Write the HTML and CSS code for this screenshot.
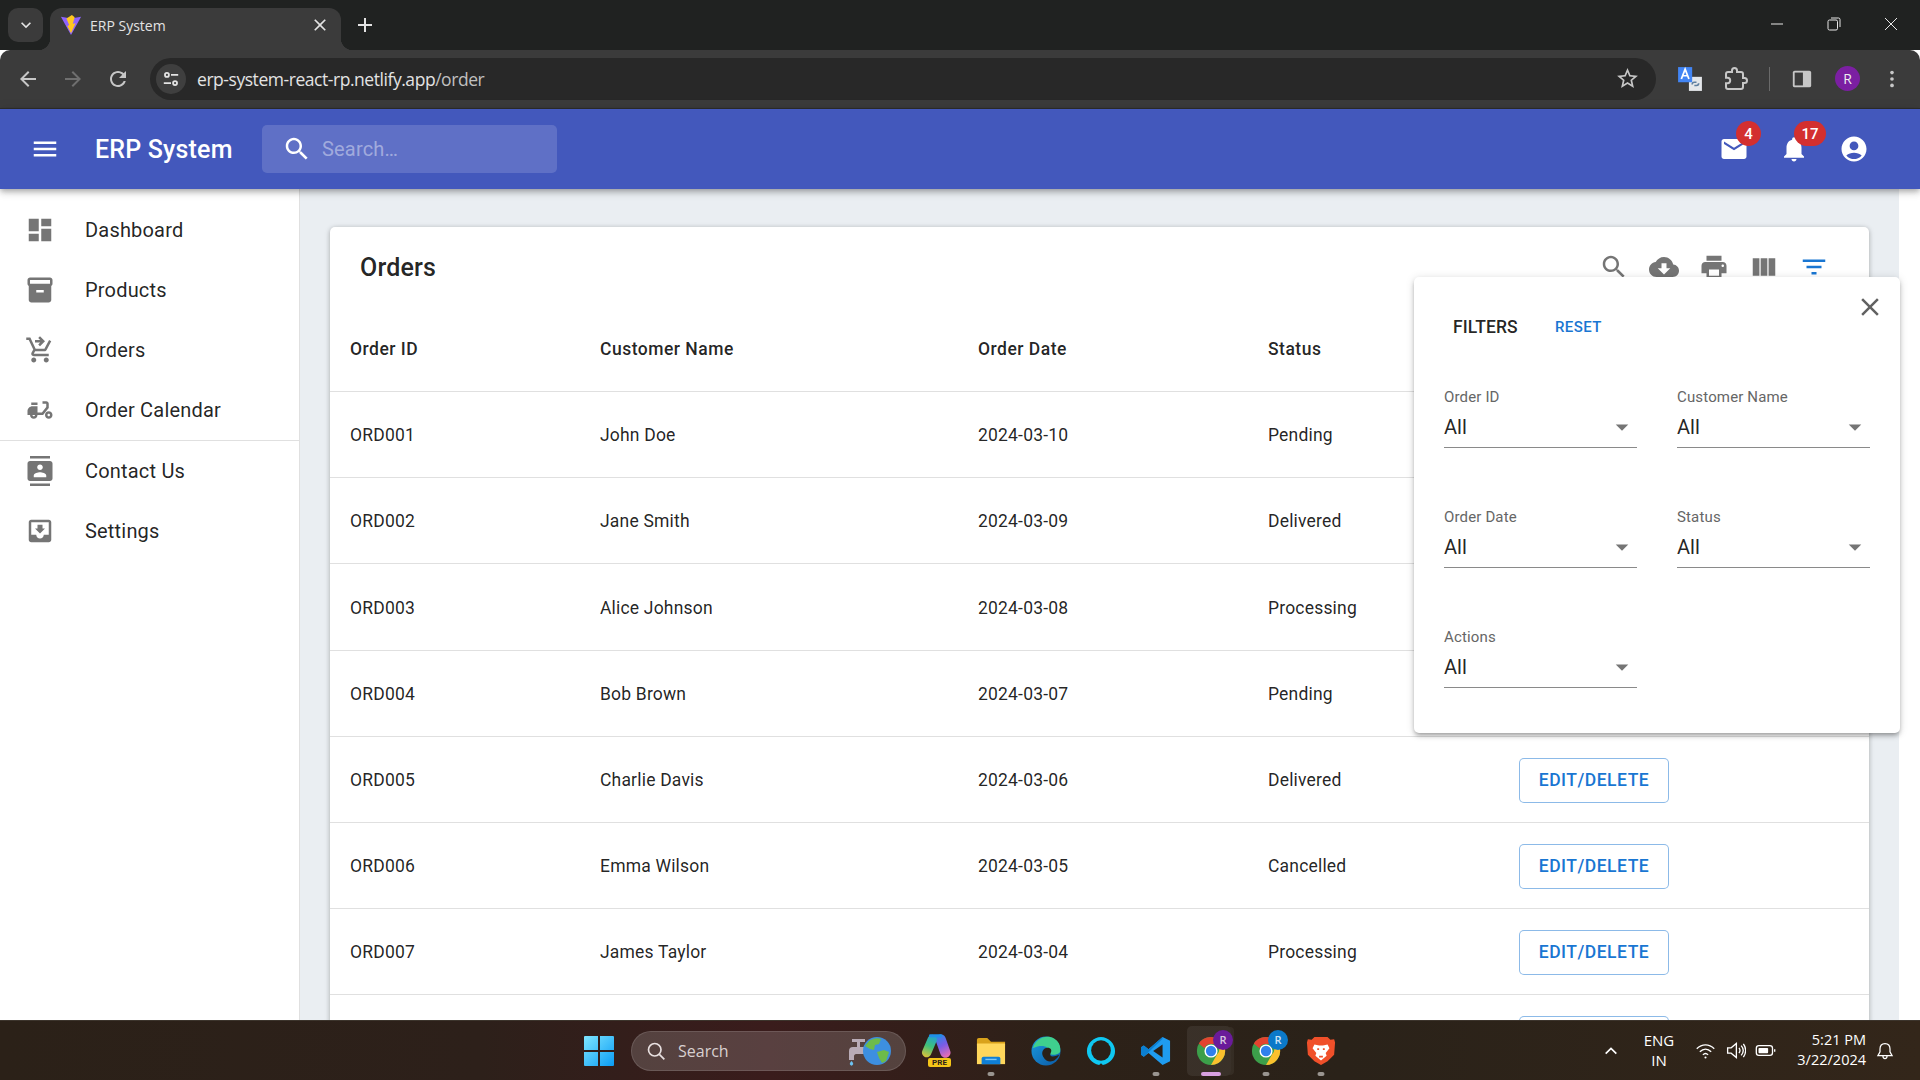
FILE: index.html
```html
<!DOCTYPE html>
<html lang="en">
<head>
  <meta charset="UTF-8">
  <meta name="viewport" content="width=device-width, initial-scale=1.0">
  <title>ERP System</title>
  <link rel="stylesheet" href="styles.css">
</head>
<body>
  <!-- browser chrome -->
  <div class="tab-strip">
    <div class="tab-list-btn"><svg viewBox="0 0 24 24" class="i18"><path d="M7.41 8.59 12 13.17l4.59-4.58L18 10l-6 6-6-6z"/></svg></div>
    <div class="tab">
      <svg viewBox="0 0 24 24" class="favicon">
        <path d="M1 3l11 2 11-2-11 20z" fill="#8f63ff"/>
        <path d="M13 1 7 5l3 7-2 1 4 8 5-11-3 .5 2-7z" fill="#ffc820"/>
      </svg>
      <span class="tab-title">ERP System</span>
      <svg viewBox="0 0 24 24" class="i18 tab-close"><path d="M19 6.41 17.59 5 12 10.59 6.41 5 5 6.41 10.59 12 5 17.59 6.41 19 12 13.41 17.59 19 19 17.59 13.41 12z"/></svg>
    </div>
    <svg viewBox="0 0 24 24" class="new-tab"><path d="M19 13h-6v6h-2v-6H5v-2h6V5h2v6h6v2z"/></svg>
    <div class="window-controls">
      <svg viewBox="0 0 14 14" class="win-btn"><path d="M1 7h12"/></svg>
      <svg viewBox="0 0 14 14" class="win-btn"><rect x="1" y="3" width="9.5" height="10" rx="1.5"/><path d="M4 1h7.5A1.5 1.5 0 0 1 13 2.5V10"/></svg>
      <svg viewBox="0 0 14 14" class="win-btn"><path d="M1 1l12 12M13 1 1 13"/></svg>
    </div>
  </div>
  <div class="toolbar">
    <svg viewBox="0 0 24 24" class="nav-icon"><path d="M20 11H7.83l5.59-5.59L12 4l-8 8 8 8 1.41-1.41L7.83 13H20v-2z"/></svg>
    <svg viewBox="0 0 24 24" class="nav-icon disabled"><path d="M12 4l-1.41 1.41L16.17 11H4v2h12.17l-5.58 5.59L12 20l8-8z"/></svg>
    <svg viewBox="0 0 24 24" class="nav-icon"><path d="M17.65 6.35C16.2 4.9 14.21 4 12 4c-4.42 0-7.99 3.58-7.99 8s3.57 8 7.99 8c3.73 0 6.84-2.55 7.73-6h-2.08c-.82 2.33-3.04 4-5.65 4-3.31 0-6-2.69-6-6s2.69-6 6-6c1.66 0 3.14.69 4.22 1.78L13 11h7V4l-2.35 2.35z"/></svg>
    <div class="address-bar">
      <span class="site-info">
        <svg viewBox="0 0 20 20" class="tune"><circle cx="5.5" cy="5.5" r="2.2"/><path d="M10 5.5h8M2 14.5h8"/><circle cx="14.5" cy="14.5" r="2.2"/></svg>
      </span>
      <span class="url">erp-system-react-rp.netlify.app<span class="url-path">/order</span></span>
      <svg viewBox="0 0 24 24" class="star"><path d="M22 9.24l-7.19-.62L12 2 9.19 8.63 2 9.24l5.46 4.73L5.82 21 12 17.27 18.18 21l-1.63-7.03L22 9.24zM12 15.4l-3.76 2.27 1-4.28-3.32-2.88 4.38-.38L12 6.1l1.71 4.04 4.38.38-3.32 2.88 1 4.28L12 15.4z"/></svg>
    </div>
    <div class="toolbar-right">
      <svg viewBox="0 0 24 24" class="translate">
        <rect x="11" y="10" width="12" height="13" fill="#e4e7ea"/>
        <path d="M14 17a2 2 0 0 1 2-2h2M20 16a2 2 0 0 1-2 2h-2" fill="none" stroke="#5f7f9f" stroke-width="1.5"/>
        <rect x="1" y="1" width="13" height="14" fill="#4285f4"/>
        <path d="M4 12l3.5-9L11 12M5.2 9h4.6" fill="none" stroke="#fff" stroke-width="1.6"/>
      </svg>
      <svg viewBox="0 0 24 24" class="puzzle"><path d="M20.5 11H19V7c0-1.1-.9-2-2-2h-4V3.5C13 2.12 11.88 1 10.5 1S8 2.12 8 3.5V5H4c-1.1 0-1.99.9-1.99 2v3.8H3.5c1.49 0 2.7 1.21 2.7 2.7s-1.21 2.7-2.7 2.7H2V20c0 1.1.9 2 2 2h13c1.1 0 2-.9 2-2v-4h1.5c1.38 0 2.5-1.12 2.5-2.5S21.88 11 20.5 11z"/></svg>
      <span class="toolbar-sep"></span>
      <svg viewBox="0 0 24 24" class="side-panel"><rect x="2" y="3" width="20" height="18" rx="2" fill="#c7c7c7"/><rect x="4" y="5" width="9" height="14" fill="#3b3b3b"/></svg>
      <span class="avatar">R</span>
      <svg viewBox="0 0 24 24" class="kebab"><circle cx="12" cy="5" r="2"/><circle cx="12" cy="12" r="2"/><circle cx="12" cy="19" r="2"/></svg>
    </div>
  </div>

  <!-- app bar -->
  <header class="app-bar">
    <svg viewBox="0 0 24 24" class="icon"><path d="M3 18h18v-2H3v2zm0-5h18v-2H3v2zm0-7v2h18V6H3z"/></svg>
    <h1 class="app-title">ERP System</h1>
    <div class="search">
      <svg viewBox="0 0 24 24" class="icon"><path d="M15.5 14h-.79l-.28-.27C15.41 12.59 16 11.11 16 9.5 16 5.91 13.09 3 9.5 3S3 5.91 3 9.5 5.91 16 9.5 16c1.61 0 3.09-.59 4.23-1.57l.27.28v.79l5 4.99L20.49 19l-4.99-5zm-6 0C7.01 14 5 11.99 5 9.5S7.01 5 9.5 5 14 7.01 14 9.5 11.99 14 9.5 14z"/></svg>
      <span class="search-placeholder">Search…</span>
    </div>
    <div class="app-actions">
      <span class="action">
        <svg viewBox="0 0 24 24" class="icon"><path d="M20 4H4c-1.1 0-1.99.9-1.99 2L2 18c0 1.1.9 2 2 2h16c1.1 0 2-.9 2-2V6c0-1.1-.9-2-2-2zm0 4l-8 5-8-5V6l8 5 8-5v2z"/></svg>
        <span class="badge badge-mail">4</span>
      </span>
      <span class="action">
        <svg viewBox="0 0 24 24" class="icon"><path d="M12 22c1.1 0 2-.9 2-2h-4c0 1.1.89 2 2 2zm6-6v-5c0-3.07-1.64-5.64-4.5-6.32V4c0-.83-.67-1.5-1.5-1.5s-1.5.67-1.5 1.5v.68C7.63 5.36 6 7.92 6 11v5l-2 2v1h16v-1l-2-2z"/></svg>
        <span class="badge badge-bell">17</span>
      </span>
      <span class="action">
        <svg viewBox="0 0 24 24" class="icon"><path d="M12 2C6.48 2 2 6.48 2 12s4.48 10 10 10 10-4.48 10-10S17.52 2 12 2zm0 4c1.93 0 3.5 1.57 3.5 3.5S13.93 13 12 13s-3.5-1.57-3.5-3.5S10.07 6 12 6zm0 14c-2.03 0-4.43-.82-6.14-2.88C7.55 15.8 9.68 15 12 15s4.45.8 6.14 2.12C16.43 19.18 14.03 20 12 20z"/></svg>
      </span>
    </div>
  </header>

  <div class="content">
    <aside class="sidebar">
      <ul class="side-list">
        <li><svg viewBox="0 0 24 24" class="icon"><path d="M3 13h8V3H3v10zm0 8h8v-6H3v6zm10 0h8V11h-8v10zm0-18v6h8V3h-8z"/></svg>Dashboard</li>
        <li><svg viewBox="0 0 24 24" class="icon"><path d="M20 2H4c-1 0-2 .9-2 2v3.01c0 .72.43 1.34 1 1.69V20c0 1.1 1.1 2 2 2h14c.9 0 2-.9 2-2V8.7c.57-.35 1-.97 1-1.69V4c0-1.1-1-2-2-2zm-5 12H9v-2h6v2zm5-7H4V4h16v3z"/></svg>Products</li>
        <li><svg viewBox="0 0 24 24" class="icon"><path d="M7 18c-1.1 0-1.99.9-1.99 2S5.9 22 7 22s2-.9 2-2-.9-2-2-2zm10 0c-1.1 0-1.99.9-1.99 2s.89 2 1.99 2 2-.9 2-2-.9-2-2-2zm-8.9-5h7.45c.75 0 1.41-.41 1.75-1.03L21 4.96 19.25 4l-3.7 7H8.53L4.27 2H1v2h2l3.6 7.59-1.35 2.44C4.52 15.37 5.48 17 7 17h12v-2H7l1.1-2zM12 1l4 4-4 4-1.41-1.41L12.17 6H8V4h4.17l-1.59-1.59L12 1z"/></svg>Orders</li>
        <li><svg viewBox="0 0 24 24" class="icon"><path d="M19 7c0-1.1-.9-2-2-2h-3v2h3v2.65L13.52 14H10V9H6c-2.21 0-4 1.79-4 4v3h2c0 1.66 1.34 3 3 3s3-1.34 3-3h4.48L19 10.35V7zM7 17c-.55 0-1-.45-1-1h2c0 .55-.45 1-1 1z"/><path d="M5 6h5v2H5z"/><path d="M19 13c-1.66 0-3 1.34-3 3s1.34 3 3 3 3-1.34 3-3-1.34-3-3-3zm0 4c-.55 0-1-.45-1-1s.45-1 1-1 1 .45 1 1-.45 1-1 1z"/></svg>Order Calendar</li>
      </ul>
      <hr class="side-divider">
      <ul class="side-list">
        <li><svg viewBox="0 0 24 24" class="icon"><path d="M20 0H4v2h16V0zM4 24h16v-2H4v2zM20 4H4c-1.1 0-2 .9-2 2v12c0 1.1.9 2 2 2h16c1.1 0 2-.9 2-2V6c0-1.1-.9-2-2-2zm-8 2.75c1.24 0 2.25 1.01 2.25 2.25s-1.01 2.25-2.25 2.25S9.75 10.24 9.75 9 10.76 6.75 12 6.75zM17 17H7v-1.5c0-1.67 3.33-2.5 5-2.5s5 .83 5 2.5V17z"/></svg>Contact Us</li>
        <li><svg viewBox="0 0 24 24" class="icon"><path d="M19 3H4.99c-1.11 0-1.98.89-1.98 2L3 19c0 1.1.88 2 1.99 2H19c1.1 0 2-.9 2-2V5c0-1.11-.9-2-2-2zm0 12h-4c0 1.66-1.35 3-3 3s-3-1.34-3-3H4.99V5H19v10zm-3-5h-2V7h-4v3H8l4 4 4-4z"/></svg>Settings</li>
      </ul>
    </aside>

    <main class="main">
      <section class="card">
        <div class="card-header">
          <h2 class="card-title">Orders</h2>
          <div class="card-tools">
            <svg viewBox="0 0 24 24" class="icon"><path d="M15.5 14h-.79l-.28-.27C15.41 12.59 16 11.11 16 9.5 16 5.91 13.09 3 9.5 3S3 5.91 3 9.5 5.91 16 9.5 16c1.61 0 3.09-.59 4.23-1.57l.27.28v.79l5 4.99L20.49 19l-4.99-5zm-6 0C7.01 14 5 11.99 5 9.5S7.01 5 9.5 5 14 7.01 14 9.5 11.99 14 9.5 14z"/></svg>
            <svg viewBox="0 0 24 24" class="icon"><path d="M19.35 10.04C18.67 6.59 15.64 4 12 4 9.11 4 6.6 5.64 5.35 8.04 2.34 8.36 0 10.91 0 14c0 3.31 2.69 6 6 6h13c2.76 0 5-2.24 5-5 0-2.64-2.05-4.78-4.65-4.96zM17 13l-5 5-5-5h3V9h4v4h3z"/></svg>
            <svg viewBox="0 0 24 24" class="icon"><path d="M19 8H5c-1.66 0-3 1.34-3 3v6h4v4h12v-4h4v-6c0-1.66-1.34-3-3-3zm-3 11H8v-5h8v5zm3-7c-.55 0-1-.45-1-1s.45-1 1-1 1 .45 1 1-.45 1-1 1zm-1-9H6v4h12V3z"/></svg>
            <svg viewBox="0 0 24 24" class="icon"><path d="M14.67 5v14H9.33V5h5.34zm1 14H21V5h-5.33v14zm-7.34 0V5H3v14h5.33z"/></svg>
            <svg viewBox="0 0 24 24" class="icon icon-active"><path d="M10 18h4v-2h-4v2zM3 6v2h18V6H3zm3 7h12v-2H6v2z"/></svg>
          </div>
        </div>
        <table class="orders">
          <colgroup>
            <col class="col-id"><col class="col-name"><col class="col-date"><col class="col-status"><col>
          </colgroup>
          <thead>
            <tr><th>Order ID</th><th>Customer Name</th><th>Order Date</th><th>Status</th><th>Actions</th></tr>
          </thead>
          <tbody>
            <tr><td>ORD001</td><td>John Doe</td><td>2024-03-10</td><td>Pending</td><td><button class="edit-btn">EDIT/DELETE</button></td></tr>
            <tr><td>ORD002</td><td>Jane Smith</td><td>2024-03-09</td><td>Delivered</td><td><button class="edit-btn">EDIT/DELETE</button></td></tr>
            <tr class="row-tall"><td>ORD003</td><td>Alice Johnson</td><td>2024-03-08</td><td>Processing</td><td><button class="edit-btn">EDIT/DELETE</button></td></tr>
            <tr><td>ORD004</td><td>Bob Brown</td><td>2024-03-07</td><td>Pending</td><td><button class="edit-btn">EDIT/DELETE</button></td></tr>
            <tr><td>ORD005</td><td>Charlie Davis</td><td>2024-03-06</td><td>Delivered</td><td><button class="edit-btn">EDIT/DELETE</button></td></tr>
            <tr><td>ORD006</td><td>Emma Wilson</td><td>2024-03-05</td><td>Cancelled</td><td><button class="edit-btn">EDIT/DELETE</button></td></tr>
            <tr><td>ORD007</td><td>James Taylor</td><td>2024-03-04</td><td>Processing</td><td><button class="edit-btn">EDIT/DELETE</button></td></tr>
            <!-- only the top edge of the next button shows above the taskbar -->
            <tr><td></td><td></td><td></td><td></td><td><button class="edit-btn"></button></td></tr>
          </tbody>
        </table>
      </section>
    </main>
    <div class="scroll-track"></div>

    <!-- filter popup sits over the table -->
    <div class="filter-popup">
      <svg viewBox="0 0 24 24" class="icon popup-close"><path d="M19 6.41 17.59 5 12 10.59 6.41 5 5 6.41 10.59 12 5 17.59 6.41 19 12 13.41 17.59 19 19 17.59 13.41 12z"/></svg>
      <div class="filter-head">
        <span class="filter-title">FILTERS</span>
        <span class="filter-reset">RESET</span>
      </div>
      <div class="filter-grid">
        <div class="field"><label>Order ID</label><div class="select"><span>All</span><svg viewBox="0 0 24 24" class="icon"><path d="M7 10l5 5 5-5z"/></svg></div></div>
        <div class="field"><label>Customer Name</label><div class="select"><span>All</span><svg viewBox="0 0 24 24" class="icon"><path d="M7 10l5 5 5-5z"/></svg></div></div>
        <div class="field"><label>Order Date</label><div class="select"><span>All</span><svg viewBox="0 0 24 24" class="icon"><path d="M7 10l5 5 5-5z"/></svg></div></div>
        <div class="field"><label>Status</label><div class="select"><span>All</span><svg viewBox="0 0 24 24" class="icon"><path d="M7 10l5 5 5-5z"/></svg></div></div>
        <div class="field"><label>Actions</label><div class="select"><span>All</span><svg viewBox="0 0 24 24" class="icon"><path d="M7 10l5 5 5-5z"/></svg></div></div>
      </div>
    </div>
  </div>

  <!-- windows taskbar -->
  <footer class="taskbar">
    <svg viewBox="0 0 30 30" class="win-logo">
      <defs><linearGradient id="winGrad" x1="0" y1="0" x2="1" y2="1"><stop offset="0" stop-color="#7fe6ff"/><stop offset="1" stop-color="#0a9cf5"/></linearGradient></defs>
      <path d="M0 1a1 1 0 0 1 1-1h13v14H0zM16 0h13a1 1 0 0 1 1 1v13H16zM0 16h14v14H1a1 1 0 0 1-1-1zM16 16h14v13a1 1 0 0 1-1 1H16z" fill="url(#winGrad)"/>
    </svg>
    <div class="task-search">
      <svg viewBox="0 0 24 24" class="task-search-icon"><circle cx="10.5" cy="10.5" r="7.5"/><path d="M16 16l6 6"/></svg>
      <span class="task-search-text">Search</span>
      <svg viewBox="0 0 44 30" class="task-search-art">
        <path d="M2 24v-9a4 4 0 0 1 4-4h4V6H5V3h13v3h-5v5h6v7H9c-1 0-2 1-2 2v4z" fill="#b9abb6"/>
        <path d="M4.5 25c-2 2.5-2.5 3.5 0 4.8 2.5-1.3 2-2.3 0-4.8z" fill="#6cc2f2"/>
        <circle cx="30" cy="15" r="14" fill="#3d8fe0"/>
        <path d="M22 5c4-3 9-3.5 12-2l-2 5-4 1-1 5-4-1-5-3zM30 16l7-2 5 2-3 9-4 2-3-5z" fill="#6dbb4a"/>
      </svg>
    </div>
    <div class="task-apps">
      <span class="task-app">
        <svg viewBox="0 0 32 28" class="app-icon copilot">
          <defs>
            <linearGradient id="copA" gradientUnits="userSpaceOnUse" x1="17" y1="0" x2="30" y2="24"><stop offset="0" stop-color="#1f8fe8"/><stop offset=".5" stop-color="#7a5ce6"/><stop offset="1" stop-color="#ee6fb0"/></linearGradient>
            <linearGradient id="copB" gradientUnits="userSpaceOnUse" x1="14" y1="0" x2="3" y2="26"><stop offset="0" stop-color="#1f9be0"/><stop offset=".5" stop-color="#3fc07a"/><stop offset="1" stop-color="#f4c430"/></linearGradient>
          </defs>
          <path d="M21 6l5 14" stroke="url(#copA)" stroke-width="11" stroke-linecap="round" fill="none"/>
          <path d="M12 6 6 20" stroke="url(#copB)" stroke-width="10" stroke-linecap="round" fill="none"/>
          <path d="M10 2h11" stroke="#1f8fe8" stroke-width="3" stroke-linecap="round"/>
        </svg>
        <span class="pre-tag">PRE</span>
      </span>
      <span class="task-app">
        <svg viewBox="0 0 32 32" class="app-icon">
          <path d="M1 4a2 2 0 0 1 2-2h9l4 4h15v4H1z" fill="#d9a21b"/>
          <path d="M1 8h30v22H1z" fill="#ffd75c"/>
          <path d="M6 30v-6a2 2 0 0 1 2-2h16a2 2 0 0 1 2 2v6z" fill="#0f7fd6"/>
          <path d="M10 25h12" stroke="#7cc7f5" stroke-width="1.5"/>
        </svg>
        <span class="task-dot"></span>
      </span>
      <span class="task-app">
        <svg viewBox="0 0 32 32" class="app-icon">
          <defs><linearGradient id="edgeGrad" x1="0" y1="0" x2="1" y2="1"><stop offset="0" stop-color="#1a9be0"/><stop offset="1" stop-color="#0c59a4"/></linearGradient></defs>
          <circle cx="16" cy="16" r="15.5" fill="url(#edgeGrad)"/>
          <path d="M2 13C5 2 17-2 25 3c5 3 7 8 6 14-1 2-4 3-8 3-3 0-5-1-4-3 1-5-6-9-17-4z" fill="#3fcf8e"/>
          <path d="M13 22c-3-5 1-11 7-9 2 1 2 3 1 5-2 4 2 5 9 2-3 7-12 11-17 2z" fill="#2a2018"/>
        </svg>
      </span>
      <span class="task-app">
        <svg viewBox="0 0 32 32" class="app-icon">
          <path d="M16 29l-2 2C6 29 1 23 1 16 1 8 8 1 16 1s15 7 15 15c0 7-5 13-13 15z" fill="#0fc8f2"/>
          <ellipse cx="16" cy="15.5" rx="10.5" ry="11" fill="#2a2018"/>
        </svg>
      </span>
      <span class="task-app">
        <svg viewBox="0 0 32 32" class="app-icon">
          <path d="M23 1l8 4v22l-8 4-15-13-5 4-3-2V12l3-2 5 4z" fill="#1f9cf0"/>
          <path d="M23 1 8 14 3 10 0 12v8l3 2 20-19z" fill="#0b7fd1"/>
          <path d="M23 9v14L13 16z" fill="#2a2018"/>
        </svg>
        <span class="task-dot"></span>
      </span>
      <span class="task-app task-app-active">
        <svg viewBox="0 0 32 32" class="app-icon">
          <circle cx="16" cy="16" r="15" fill="#3c9f4a"/>
          <path d="M16 1a15 15 0 0 1 13 7.5H16a7.5 7.5 0 0 0-7 4.5L3 8a15 15 0 0 1 13-7z" fill="#e3432f"/>
          <path d="M29 8.5A15 15 0 0 1 16 31l6.5-11.5a7.5 7.5 0 0 0 0-11z" fill="#fbc02d"/>
          <circle cx="16" cy="16" r="7" fill="#fff"/>
          <circle cx="16" cy="16" r="5.5" fill="#2f80ed"/>
        </svg>
        <span class="profile-badge purple">R</span>
        <span class="task-pill"></span>
      </span>
      <span class="task-app">
        <svg viewBox="0 0 32 32" class="app-icon">
          <circle cx="16" cy="16" r="15" fill="#3c9f4a"/>
          <path d="M16 1a15 15 0 0 1 13 7.5H16a7.5 7.5 0 0 0-7 4.5L3 8a15 15 0 0 1 13-7z" fill="#e3432f"/>
          <path d="M29 8.5A15 15 0 0 1 16 31l6.5-11.5a7.5 7.5 0 0 0 0-11z" fill="#fbc02d"/>
          <circle cx="16" cy="16" r="7" fill="#fff"/>
          <circle cx="16" cy="16" r="5.5" fill="#2f80ed"/>
        </svg>
        <span class="profile-badge blue">R</span>
        <span class="task-dot"></span>
      </span>
      <span class="task-app">
        <svg viewBox="0 0 32 32" class="app-icon">
          <path d="M9 1h14l3 3 4-.5L31 7l-1 13-7 7-7 4-7-4-7-7L1 7l1-3.5L6 4z" fill="#f0502a"/>
          <path d="M9 9l5 1h4l5-1 2 4-4 5 1 3-6 5-6-5 1-3-4-5z" fill="#fff"/>
          <path d="M12 14h2M18 14h2M14 22h4" stroke="#f0502a" stroke-width="2"/>
        </svg>
        <span class="task-dot"></span>
      </span>
    </div>
    <div class="tray">
      <svg viewBox="0 0 24 24" class="tray-caret"><path d="M4 16l8-8 8 8"/></svg>
      <div class="tray-lang"><span>ENG</span><span>IN</span></div>
      <svg viewBox="0 0 24 24" class="tray-icon"><path d="M2 10c6-6 14-6 20 0M5.5 13.5c4-4 9-4 13 0M9 17c2-2 4-2 6 0"/><circle cx="12" cy="20" r="1.2" fill="#fff" stroke="none"/></svg>
      <svg viewBox="0 0 24 24" class="tray-icon"><path d="M3 9v6h4l6 5V4L7 9zM16 9c1.5 2 1.5 4 0 6M18.5 6.5c3 3.5 3 7.5 0 11M21 4.5c3.5 5 3.5 10 0 15"/></svg>
      <svg viewBox="0 0 24 24" class="tray-icon"><rect x="1.5" y="6.5" width="18.5" height="11" rx="3"/><rect x="4" y="9" width="11" height="6" rx="1" fill="#fff" stroke="none"/><path d="M22.5 10.5v3"/></svg>
      <div class="tray-clock"><span>5:21 PM</span><span>3/22/2024</span></div>
      <svg viewBox="0 0 24 24" class="tray-bell"><path d="M12 3c-4 0-6 3-6 6.5V13l-2.5 4.5h17L18 13V9.5C18 6 16 3 12 3zM9.5 18c0 2 1 3 2.5 3s2.500-1 2.500-3"/></svg>
    </div>
  </footer>
</body>
</html>
```

FILE: styles.css
```css
* {
  box-sizing: border-box;
}

body {
  margin: 0;
  height: 100vh;
  overflow: hidden;
  display: flex;
  flex-direction: column;
  font-family: Roboto, Arial, sans-serif;
  color: rgba(0, 0, 0, 0.87);
  background: #fff;
}

svg {
  display: block;
  flex-shrink: 0;
}

/* browser chrome */
.tab-strip {
  height: 50px;
  background: #202221;
  display: flex;
  align-items: flex-start;
  padding: 8px 0 0 8px;
  color: #e3e3e3;
  font-family: "Open Sans", "Noto Sans", sans-serif;
}

.tab-list-btn {
  width: 35px;
  height: 34px;
  background: #3b3b3b;
  border-radius: 10px;
  display: flex;
  align-items: center;
  justify-content: center;
}

.i18 {
  width: 20px;
  height: 20px;
  fill: #e3e3e3;
}

.tab {
  position: relative;
  width: 291px;
  height: 42px;
  margin-left: 7px;
  background: #3b3b3b;
  border-radius: 12px 12px 0 0;
  display: flex;
  align-items: center;
  padding: 0 11px 8px 10px;
}

.tab::before,
.tab::after {
  content: "";
  position: absolute;
  bottom: 0;
  width: 12px;
  height: 12px;
}

.tab::before {
  left: -12px;
  background: radial-gradient(circle at 0 0, transparent 12px, #3b3b3b 12.5px);
}

.tab::after {
  right: -12px;
  background: radial-gradient(circle at 100% 0, transparent 12px, #3b3b3b 12.5px);
}

.favicon {
  width: 22px;
  height: 22px;
}

.tab-title {
  margin-left: 8px;
  font-size: 14px;
  flex: 1;
}

.new-tab {
  width: 24px;
  height: 24px;
  fill: #e3e3e3;
  margin: 5px 0 0 12px;
}

.window-controls {
  margin-left: auto;
  display: flex;
  gap: 43px;
  padding: 9px 22px 0 0;
}

.win-btn {
  width: 14px;
  height: 14px;
  fill: none;
  stroke: #e8e8e8;
  stroke-width: 1;
}

.toolbar {
  height: 59px;
  background: #3b3b3b;
  border-bottom: 1px solid #2e2e2e;
  border-radius: 10px 10px 0 0;
  display: flex;
  align-items: center;
  padding: 0 16px 1px 16px;
  gap: 21px;
}

.nav-icon {
  width: 24px;
  height: 24px;
  fill: #c7c7c7;
}

.nav-icon.disabled {
  fill: #6f6f6f;
}

.address-bar {
  width: 1506px;
  height: 42px;
  margin-left: -1px;
  background: #282828;
  border-radius: 21px;
  display: flex;
  align-items: center;
  padding: 0 16px 0 6px;
}

.site-info {
  width: 30px;
  height: 30px;
  border-radius: 50%;
  background: #3f3f3f;
  display: flex;
  align-items: center;
  justify-content: center;
}

.tune {
  width: 18px;
  height: 18px;
  fill: none;
  stroke: #e3e3e3;
  stroke-width: 2;
}

.url {
  margin-left: 11px;
  font-size: 17.5px;
  color: #e3e3e3;
  font-family: "Open Sans", "Noto Sans", sans-serif;
  letter-spacing: -0.45px;
}

.url-path {
  color: #c0c0c0;
}

.star {
  margin-left: auto;
  width: 25px;
  height: 25px;
  fill: #c7c7c7;
}

.toolbar-right {
  flex: 1;
  margin-left: -6px;
  display: flex;
  align-items: center;
}

.translate {
  width: 26px;
  height: 26px;
  margin-left: 6px;
}

.puzzle {
  width: 24px;
  height: 24px;
  margin-left: 21px;
  fill: none;
  stroke: #c7c7c7;
  stroke-width: 2;
}

.toolbar-sep {
  width: 1px;
  height: 24px;
  margin-left: 21px;
  background: #6a6a6a;
}

.side-panel {
  width: 22px;
  height: 22px;
  margin-left: 21px;
}

.avatar {
  width: 25px;
  height: 25px;
  margin-left: 22px;
  border-radius: 50%;
  background: #7b1fa2;
  color: #eee;
  font-size: 14px;
  display: flex;
  align-items: center;
  justify-content: center;
  font-family: "Open Sans", sans-serif;
}

.kebab {
  width: 22px;
  height: 22px;
  margin-left: 21px;
  fill: #c7c7c7;
}

/* app bar */
.app-bar {
  position: relative;
  z-index: 2;
  height: 80px;
  background: #4358bc;
  color: #fff;
  display: flex;
  align-items: center;
  padding: 0 51px 0 30px;
  box-shadow: 0 2px 5px -1px rgba(0, 0, 0, 0.2), 0 4px 6px rgba(0, 0, 0, 0.14), 0 1px 12px rgba(0, 0, 0, 0.12);
}

.icon {
  width: 30px;
  height: 30px;
  fill: currentColor;
}

.app-title {
  margin: 0 0 0 35px;
  width: 167px;
  font-size: 25px;
  font-weight: 500;
  letter-spacing: 0.19px;
}

.search {
  width: 295px;
  height: 48px;
  background: rgba(255, 255, 255, 0.15);
  border-radius: 5px;
  display: flex;
  align-items: center;
  gap: 10px;
  padding-left: 20px;
}

.search-placeholder {
  font-size: 20px;
  letter-spacing: 0.19px;
  color: rgba(255, 255, 255, 0.42);
}

.app-actions {
  margin-left: auto;
  display: flex;
  gap: 30px;
}

.action {
  position: relative;
  display: block;
}

.badge {
  position: absolute;
  top: -13px;
  height: 25px;
  min-width: 25px;
  border-radius: 13px;
  background: #d32f2f;
  color: #fff;
  font-size: 15px;
  font-weight: 500;
  display: flex;
  align-items: center;
  justify-content: center;
}

.badge-mail {
  left: 17px;
}

.badge-bell {
  left: 15px;
  width: 32px;
}

/* page body */
.content {
  position: relative;
  flex: 1;
  min-height: 0;
  display: flex;
}

.sidebar {
  width: 300px;
  flex-shrink: 0;
  background: #fff;
  border-right: 1px solid #e0e0e0;
  padding-top: 11px;
}

.side-list {
  list-style: none;
  margin: 0;
  padding: 0;
}

.side-list li {
  height: 60px;
  display: flex;
  align-items: center;
  gap: 30px;
  padding-left: 25px;
  font-size: 20px;
  letter-spacing: 0.19px;
}

.side-list .icon {
  color: #757575;
}

.side-divider {
  margin: 0;
  border: 0;
  border-top: 1px solid #e0e0e0;
}

.main {
  flex: 1;
  min-width: 0;
  overflow: hidden;
  background: #eaeef2;
  padding: 38px 30px 0 30px;
}

.scroll-track {
  width: 21px;
  flex-shrink: 0;
  background: #fff;
}

.card {
  background: #fff;
  border-radius: 5px 5px 0 0;
  box-shadow: 0 2px 2px -1px rgba(0, 0, 0, 0.2), 0 1px 4px rgba(0, 0, 0, 0.16), 0 1px 6px rgba(0, 0, 0, 0.14);
}

.card-header {
  height: 80px;
  display: flex;
  align-items: center;
  justify-content: space-between;
  padding: 0 40px 0 30px;
}

.card-title {
  margin: 0;
  font-size: 25px;
  font-weight: 500;
  letter-spacing: 0.19px;
}

.card-tools {
  display: flex;
  gap: 20px;
  color: #757575;
}

.icon-active {
  color: #1976d2;
}

.orders {
  width: 100%;
  table-layout: fixed;
  border-collapse: separate;
  border-spacing: 0;
  font-size: 17.5px;
}

.col-id {
  width: 250px;
}

.col-name {
  width: 378px;
}

.col-date {
  width: 290px;
}

.col-status {
  width: 251px;
}

.orders th,
.orders td {
  padding: 0 20px;
  text-align: left;
  border-bottom: 1px solid #e0e0e0;
}

.orders th {
  height: 85px;
  font-weight: 500;
  letter-spacing: 0.5px;
}

.orders td {
  height: 86px;
  font-weight: 400;
  letter-spacing: 0.19px;
  padding-top: 1px;
}

.orders .row-tall td {
  height: 87px;
}

.orders td:last-child,
.orders th:last-child {
  padding-right: 0;
}

.edit-btn {
  display: block;
  width: 150px;
  height: 45px;
  background: #fff;
  border: 1px solid rgba(25, 118, 210, 0.5);
  border-radius: 5px;
  color: #1976d2;
  font-family: inherit;
  font-size: 17.5px;
  font-weight: 500;
  letter-spacing: 0.5px;
  padding: 0;
}

/* filter popup */
.filter-popup {
  position: absolute;
  top: 88px;
  right: 20px;
  width: 486px;
  height: 456px;
  background: #fff;
  border-radius: 5px;
  padding: 39px 30px 0 30px;
  box-shadow: 0 3px 4px -2px rgba(0, 0, 0, 0.25), 0 3px 5px rgba(0, 0, 0, 0.16), 0 1px 10px rgba(0, 0, 0, 0.12);
}

.popup-close {
  position: absolute;
  top: 15px;
  right: 15px;
  color: #616161;
}

.filter-head {
  display: flex;
  align-items: center;
  height: 22px;
  padding-left: 9px;
}

.filter-title {
  font-size: 17.5px;
  font-weight: 500;
  letter-spacing: 0.1px;
  width: 102px;
}

.filter-reset {
  font-size: 15px;
  font-weight: 500;
  color: #1976d2;
  letter-spacing: 0.4px;
}

.filter-grid {
  display: grid;
  grid-template-columns: 193px 193px;
  column-gap: 40px;
  row-gap: 46px;
  margin-top: 49px;
}

.field {
  height: 74px;
  display: flex;
  flex-direction: column;
}

.field label {
  font-size: 15px;
  letter-spacing: 0.15px;
  color: #666;
  line-height: 18px;
  margin-top: 1px;
}

.select {
  margin-top: 6px;
  height: 36px;
  font-size: 20px;
  border-bottom: 1px solid #8a8a8a;
  display: flex;
  align-items: center;
  justify-content: space-between;
  padding: 0 0 5px 0;
}

.select .icon {
  color: #757575;
}

/* taskbar */
.taskbar {
  height: 60px;
  flex-shrink: 0;
  position: relative;
  z-index: 3;
  display: flex;
  align-items: center;
  padding-left: 584px;
  color: #fff;
  border-top: 1px solid #3c342c;
  background: linear-gradient(90deg, #2b2118 0, #2d201a 25%, #3a1c1c 40%, #2d2118 55%, #2a2219 70%, #33261a 100%);
  font-family: "Open Sans", "Noto Sans", sans-serif;
}

.win-logo {
  width: 30px;
  height: 30px;
}

.task-search {
  width: 275px;
  height: 40px;
  margin-left: 17px;
  border-radius: 20px;
  background: rgba(255, 255, 255, 0.16);
  border: 1px solid rgba(255, 255, 255, 0.12);
  display: flex;
  align-items: center;
  padding-left: 14px;
}

.task-search-icon {
  width: 20px;
  height: 20px;
  fill: none;
  stroke: #e8e0e0;
  stroke-width: 2;
}

.task-search-text {
  margin-left: 12px;
  font-size: 16px;
  color: #d8d0d0;
}

.task-search-art {
  margin-left: auto;
  margin-right: 14px;
  width: 44px;
  height: 30px;
}

.task-apps {
  display: flex;
  margin-left: 10px;
  gap: 15px;
}

.task-app {
  position: relative;
  width: 40px;
  height: 50px;
  display: flex;
  align-items: center;
  justify-content: center;
}

.app-icon {
  width: 30px;
  height: 30px;
}

.app-icon.copilot {
  margin-top: -7px;
}

.task-app-active::before {
  content: "";
  position: absolute;
  top: 0;
  bottom: 0;
  left: -4px;
  right: 0;
  background: rgba(255, 255, 255, 0.07);
  border-radius: 5px;
  box-shadow: 4px 0 0 -1px rgba(255, 255, 255, 0.05);
}

.task-app-active .app-icon {
  position: relative;
}

.task-dot,
.task-pill {
  position: absolute;
  bottom: 0;
  left: 50%;
  height: 4px;
  border-radius: 2px;
  transform: translateX(-50%);
}

.task-dot {
  width: 7px;
  background: #9a9590;
}

.task-pill {
  width: 20px;
  background: #d8a0e0;
}

.pre-tag {
  position: absolute;
  left: 12px;
  bottom: 9px;
  width: 23px;
  height: 9px;
  border-radius: 2px;
  background: #f5c518;
  color: #2a2018;
  font-size: 8px;
  font-weight: 700;
  line-height: 9px;
  text-align: center;
  font-family: Roboto, sans-serif;
}

.profile-badge {
  position: absolute;
  top: 4px;
  right: -2px;
  width: 20px;
  height: 20px;
  border-radius: 50%;
  color: #d8c8e0;
  font-size: 11px;
  font-weight: 600;
  display: flex;
  align-items: center;
  justify-content: center;
}

.profile-badge.purple {
  background: #6a1b9a;
}

.profile-badge.blue {
  background: #0b79c9;
  color: #cfe4f5;
}

.tray {
  margin-left: auto;
  display: flex;
  align-items: center;
  padding-right: 25px;
  font-size: 15px;
}

.tray-caret {
  width: 16px;
  height: 16px;
  fill: none;
  stroke: #fff;
  stroke-width: 2.5;
  margin-right: 20px;
}

.tray-lang {
  width: 40px;
  display: flex;
  flex-direction: column;
  align-items: center;
  line-height: 20px;
  margin: 0 16px 2px 0;
}

.tray-icon {
  width: 21px;
  height: 21px;
  margin-right: 9px;
  fill: none;
  stroke: #fff;
  stroke-width: 1.5;
}

.tray-clock {
  width: 81px;
  display: flex;
  flex-direction: column;
  align-items: flex-end;
  font-size: 14.5px;
  line-height: 20px;
  margin: 0 9px 2px 0;
}

.tray-bell {
  width: 20px;
  height: 20px;
  fill: none;
  stroke: #fff;
  stroke-width: 1.5;
}
```
